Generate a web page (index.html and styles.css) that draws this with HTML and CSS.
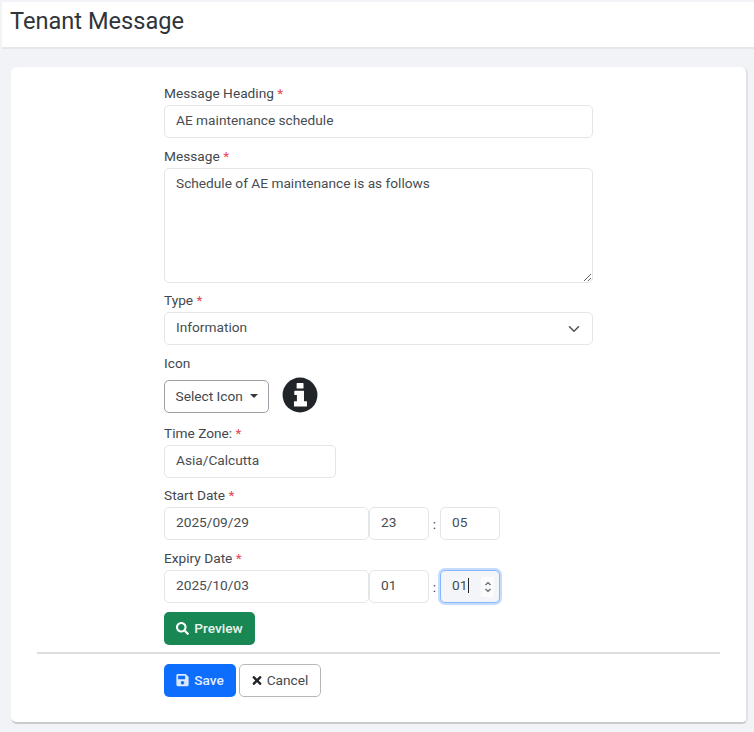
FILE: index.html
```html
<!DOCTYPE html>
<html lang="en">
<head>
<meta charset="utf-8">
<title>Tenant Message</title>
<link rel="stylesheet" href="styles.css">
</head>
<body>
<header class="page-header"><h1>Tenant Message</h1></header>
<main class="card">
  <form class="form">
    <div class="field">
      <label class="label">Message Heading <span class="req">*</span></label>
      <input class="control" type="text" value="AE maintenance schedule">
    </div>
    <div class="field field-tight">
      <label class="label">Message <span class="req">*</span></label>
      <textarea class="control area">Schedule of AE maintenance is as follows</textarea>
    </div>
    <div class="field">
      <label class="label">Type <span class="req">*</span></label>
      <div class="control select">
        <span>Information</span>
        <svg class="chevron" viewBox="0 0 16 16" width="16" height="16"><path d="M3.500 5.800 8 10.200l4.500-4.400" fill="none" stroke="#4f565c" stroke-width="1.600" stroke-linecap="round" stroke-linejoin="round"/></svg>
      </div>
    </div>
    <div class="field">
      <label class="label">Icon</label>
      <div class="icon-row">
        <button type="button" class="btn btn-outline-dark">Select Icon<span class="caret"></span></button>
        <svg class="info" viewBox="0 0 512 512" width="36" height="36"><circle cx="256" cy="256" r="248" fill="#212529"/><path fill="#fff" d="M216 85h82a8 8 0 0 1 8 8v64a8 8 0 0 1-8 8h-82a8 8 0 0 1-8-8V93a8 8 0 0 1 8-8zM183 195h122a8 8 0 0 1 8 8v142h34a8 8 0 0 1 8 8v59a8 8 0 0 1-8 8H178a8 8 0 0 1-8-8v-59a8 8 0 0 1 8-8h34v-90h-29a8 8 0 0 1-8-8v-44a8 8 0 0 1 8-8z"/></svg>
      </div>
    </div>
    <div class="field field-tight">
      <label class="label">Time Zone: <span class="req">*</span></label>
      <input class="control tz" type="text" value="Asia/Calcutta">
    </div>
    <div class="field">
      <label class="label">Start Date <span class="req">*</span></label>
      <div class="date-row">
        <input class="control date" type="text" value="2025/09/29">
        <input class="control time" type="text" value="23">
        <span class="colon">:</span>
        <input class="control time" type="text" value="05">
      </div>
    </div>
    <div class="field">
      <label class="label">Expiry Date <span class="req">*</span></label>
      <div class="date-row">
        <input class="control date" type="text" value="2025/10/03">
        <input class="control time" type="text" value="01">
        <span class="colon">:</span>
        <div class="control time focused">
          <span class="caret-text">01</span>
          <span class="spin"><svg viewBox="0 0 10 14" width="10" height="14"><path d="M2.500 5 5 2.600 7.500 5M2.500 9 5 11.400 7.500 9" fill="none" stroke="#5c6368" stroke-width="1.200"/></svg></span>
        </div>
      </div>
    </div>
    <button type="button" class="btn btn-success">
      <svg viewBox="0 0 512 512" width="13" height="13"><path fill="#fff" d="M505 442.700 405.300 343c-4.500-4.500-10.600-7-17-7H372c27.600-35.300 44-79.700 44-128C416 93.100 322.900 0 208 0S0 93.100 0 208s93.100 208 208 208c48.300 0 92.700-16.400 128-44v16.300c0 6.400 2.500 12.500 7 17l99.700 99.700c9.400 9.400 24.600 9.400 33.900 0l28.300-28.300c9.400-9.400 9.400-24.600.1-34zM208 336c-70.700 0-128-57.200-128-128 0-70.700 57.200-128 128-128 70.700 0 128 57.200 128 128 0 70.700-57.200 128-128 128z"/></svg>
      Preview
    </button>
  </form>
  <hr class="rule">
  <div class="actions">
    <button type="button" class="btn btn-primary">
      <svg viewBox="0 0 448 512" width="13" height="14"><path fill="#dbe8ff" d="M433.900 129.900l-83.900-83.900A48 48 0 0 0 316.100 32H48C21.500 32 0 53.500 0 80v352c0 26.500 21.500 48 48 48h352c26.500 0 48-21.500 48-48V163.900a48 48 0 0 0-14.100-34zM224 416c-35.300 0-64-28.700-64-64 0-35.300 28.700-64 64-64s64 28.700 64 64c0 35.300-28.700 64-64 64zm96-304.500V212c0 6.600-5.400 12-12 12H76c-6.600 0-12-5.400-12-12V108c0-6.600 5.400-12 12-12h228.500c3.200 0 6.200 1.300 8.500 3.500l3.500 3.500c2.200 2.200 3.500 5.300 3.500 8.500z"/></svg>
      Save
    </button>
    <button type="button" class="btn btn-light">
      <svg viewBox="0 0 352 512" width="10" height="13"><path fill="#212529" d="M242.700 256l100-100c12.300-12.300 12.300-32.200 0-44.500l-22.200-22.200c-12.300-12.300-32.200-12.300-44.500 0L176 189.300 76 89.200c-12.300-12.300-32.200-12.300-44.500 0L9.200 111.500c-12.300 12.300-12.300 32.200 0 44.500l100.100 100L9.200 356c-12.300 12.300-12.300 32.200 0 44.500l22.300 22.300c12.300 12.300 32.200 12.300 44.500 0l100-100.100 100 100.100c12.300 12.300 32.200 12.300 44.500 0l22.200-22.300c12.300-12.300 12.300-32.200 0-44.500L242.700 256z"/></svg>
      Cancel
    </button>
  </div>
</main>
</body>
</html>
```
FILE: styles.css
```css
* { box-sizing: border-box; }
html, body { height: 100%; }
body {
  margin: 0;
  padding: 2px 0 0 2px;
  background: #f1f3f6;
  font-family: Roboto, "Liberation Sans", sans-serif;
  font-size: 13.700px;
  color: #42484d;
  overflow: hidden;
}
.page-header {
  height: 47px;
  background: #fff;
  border-bottom: 2px solid #e6e7e9;
  padding: 5px 8px;
}
.page-header h1 {
  margin: 0;
  font-size: 23.600px;
  line-height: 28px;
  font-weight: 400;
  color: #2f353a;
}
.card {
  margin: 18px 6px 0 9px;
  height: 657px;
  background: #fff;
  border-radius: 6px;
  border-right: 2px solid #e1e2e5;
  border-bottom: 2px solid #c9cacc;
  padding: 17px 26px 0;
}
.form {
  width: 429px;
  margin-left: 127px;
  display: flex;
  flex-direction: column;
  align-items: flex-start;
}
.field { width: 100%; margin-bottom: 9px; }
.field-tight { margin-bottom: 8px; }
.label {
  display: block;
  height: 21px;
  line-height: 19px;
  color: #42484d;
}
.req { color: #e4465a; }
.control {
  display: block;
  width: 100%;
  height: 33px;
  padding: 0 11px 3px;
  background: #fff;
  border: 1.500px solid #e4e5e7;
  border-radius: 5px;
  font: inherit;
  color: #474d52;
  outline: none;
}
.area {
  height: 115px;
  padding-top: 5px;
  line-height: 18px;
  resize: vertical;
}
.select {
  display: flex;
  align-items: center;
  justify-content: space-between;
  padding-right: 10px;
  padding-bottom: 0;
}
.select span { margin-bottom: 3px; }
.icon-row {
  display: flex;
  align-items: center;
  gap: 13px;
  height: 40px;
}
.info { display: block; }
.tz { width: 172px; }
.date-row {
  display: flex;
  align-items: center;
}
.date { width: 205px; }
.time { width: 60px; }
.colon {
  width: 11px;
  text-align: center;
}
.focused {
  display: flex;
  align-items: center;
  justify-content: space-between;
  padding-right: 5px;
  padding-bottom: 0;
  background: #f3f5f9;
  border-color: #86b7fe;
  box-shadow: 0 0 0 2px #c5dcfd;
}
.caret-text {
  border-right: 1px solid #212529;
  padding-right: 1px;
  line-height: 15px;
  margin-bottom: 2px;
}
.spin {
  display: flex;
  align-items: center;
  justify-content: center;
  width: 13px;
  height: 20px;
  background: #fbfbfc;
}
.spin svg { display: block; }
.btn {
  display: inline-flex;
  align-items: center;
  justify-content: center;
  gap: 5px;
  height: 33px;
  padding: 0 6px 1px;
  border-radius: 5px;
  border: 1.500px solid transparent;
  font: inherit;
  font-weight: 500;
  white-space: nowrap;
}
.btn-outline-dark {
  width: 105px;
  height: 33px;
  margin-top: 2px;
  justify-content: flex-start;
  gap: 3px;
  padding-left: 10.500px;
  font-weight: 400;
  color: #42484d;
  background: #fff;
  border-color: #9aa0a5;
}
.caret {
  display: inline-block;
  margin-left: 4px;
  border-top: 4px solid #33383c;
  border-left: 4px solid transparent;
  border-right: 4px solid transparent;
}
.btn-success {
  width: 91px;
  background: #198754;
  color: #e9f4ee;
}
.rule {
  margin: 7px 0 0;
  border: 0;
  border-top: 2px solid #dcdddf;
}
.actions {
  display: flex;
  gap: 3px;
  margin: 10px 0 0 127px;
}
.btn-primary {
  width: 72px;
  background: #0d6efd;
  color: #e3edff;
}
.btn-light {
  width: 82px;
  background: #fff;
  border-color: #b5b7ba;
  color: #42484d;
  font-weight: 400;
}
```
